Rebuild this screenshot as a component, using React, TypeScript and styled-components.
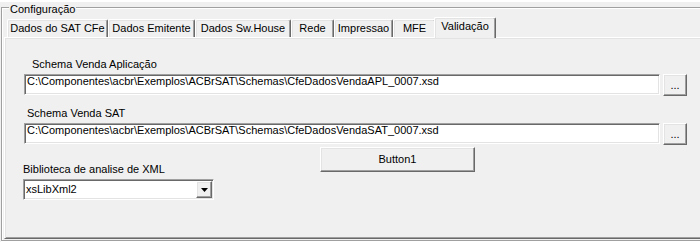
import React from 'react'
import styled, { createGlobalStyle } from "styled-components";

const GlobalStyle = createGlobalStyle`
  html, body {
    margin: 0;
    padding: 0;
    background: #f0f0f0;
  }
  body {
    font-family: "Liberation Sans", Arial, sans-serif;
    font-size: 11px;
    color: #000;
  }
`;

const tabs = [
  { label: "Dados do SAT CFe", width: 101 },
  { label: "Dados Emitente", width: 87 },
  { label: "Dados Sw.House", width: 96 },
  { label: "Rede", width: 43 },
  { label: "Impressao", width: 59 },
  { label: "MFE", width: 43 },
  { label: "Validação", width: 58 },
];

const App = () => {
  const active = 6;
  return (
    <>
      <GlobalStyle />
      <Window>
        <GroupBox>
          <Caption>Configuração</Caption>
          <TabControl>
            <TabStrip>
              {tabs.map((t, i) => (
                <Tab key={t.label} $width={t.width} $active={i === active}>
                  {t.label}
                </Tab>
              ))}
            </TabStrip>
            <Sheet>
              <Label $left={27} $top={20}>Schema Venda Aplicação</Label>
              <EditRow>
                <Edit>C:\Componentes\acbr\Exemplos\ACBrSAT\Schemas\CfeDadosVendaAPL_0007.xsd</Edit>
                <BrowseButton>...</BrowseButton>
              </EditRow>
              <Label $left={22} $top={11}>Schema Venda SAT</Label>
              <EditRow>
                <Edit>C:\Componentes\acbr\Exemplos\ACBrSAT\Schemas\CfeDadosVendaSAT_0007.xsd</Edit>
                <BrowseButton>...</BrowseButton>
              </EditRow>
              <BottomRow>
                <ComboColumn>
                  <Label $left={0} $top={0}>Biblioteca de analise de XML</Label>
                  <Combo>
                    <ComboText>xsLibXml2</ComboText>
                    <ComboButton>
                      <svg width="7" height="4" viewBox="0 0 7 4">
                        <path d="M0 0h7L3.5 4z" fill="#000" />
                      </svg>
                    </ComboButton>
                  </Combo>
                </ComboColumn>
                <Button1>Button1</Button1>
              </BottomRow>
            </Sheet>
          </TabControl>
        </GroupBox>
      </Window>
    </>
  )
}

const Window = styled.div`
  width: 700px;
  height: 242px;
  overflow: hidden;
  background: #f0f0f0;
  box-shadow: inset 0 2px 0 #fff, inset 0 1px 0 #f0f0f0;
  padding-top: 7px;
  box-sizing: border-box;
`;

const GroupBox = styled.div`
  position: relative;
  box-sizing: border-box;
  margin-left: 1px;
  width: 740px;
  height: 234px;
  border: 1px solid #a0a0a0;
  box-shadow: inset 1px 1px 0 #fff, 0 1px 0 #fff;
`;

const Caption = styled.span`
  position: absolute;
  top: -5px;
  left: 7px;
  padding: 0 1px;
  line-height: 13px;
  background: #f0f0f0;
`;

const TabControl = styled.div`
  margin: 9px 0 0 2px;
`;

const TabStrip = styled.div`
  display: flex;
  align-items: flex-end;
  height: 20px;
  padding-left: 3px;
`;

const Tab = styled.div<{ $width: number; $active: boolean }>`
  position: relative;
  box-sizing: border-box;
  width: ${p => p.$width + (p.$active ? 4 : 0)}px;
  height: ${p => (p.$active ? 21 : 18)}px;
  margin: ${p => (p.$active ? "0 -2px -1px -2px" : "0")};
  z-index: ${p => (p.$active ? 2 : 1)};
  padding-top: 2px;
  text-align: center;
  line-height: 13px;
  white-space: nowrap;
  background: #f0f0f0;
  border-top: 1px solid #fff;
  border-left: 1px solid #fff;
  border-right: 1px solid #696969;
  border-top-left-radius: 2px;
  border-top-right-radius: 2px;
  box-shadow: inset -1px 0 0 #a0a0a0, inset 1px 1px 0 #e3e3e3;
`;

const Sheet = styled.div`
  box-sizing: border-box;
  height: 202px;
  border-top: 1px solid #fff;
  border-left: 1px solid #fff;
  border-bottom: 1px solid #696969;
  box-shadow: inset 1px 1px 0 #e3e3e3, inset 0 -1px 0 #a0a0a0;
  overflow: hidden;
`;

const Label = styled.div<{ $left: number; $top: number }>`
  margin: ${p => p.$top}px 0 0 ${p => p.$left}px;
  line-height: 13px;
  white-space: nowrap;
`;

const EditRow = styled.div`
  display: flex;
  gap: 3px;
  margin: 3px 0 0 19px;
`;

const Edit = styled.div`
  box-sizing: border-box;
  width: 636px;
  height: 21px;
  padding: 0 2px;
  line-height: 13px;
  white-space: nowrap;
  overflow: hidden;
  background: #fff;
  border-top: 1px solid #a0a0a0;
  border-left: 1px solid #a0a0a0;
  border-bottom: 1px solid #fff;
  border-right: 1px solid #fff;
  box-shadow: inset 1px 1px 0 #696969, inset -1px -1px 0 #e3e3e3;
`;

const RaisedButton = styled.div`
  box-sizing: border-box;
  display: flex;
  align-items: center;
  justify-content: center;
  background: #f0f0f0;
  border-top: 1px solid #fff;
  border-left: 1px solid #fff;
  border-right: 1px solid #696969;
  border-bottom: 1px solid #696969;
  box-shadow: inset -1px -1px 0 #a0a0a0, inset 1px 1px 0 #e3e3e3;
`;

const BrowseButton = styled(RaisedButton)`
  width: 24px;
  height: 22px;
  align-items: flex-end;
  padding-bottom: 4px;
  line-height: 11px;
`;

const BottomRow = styled.div`
  display: flex;
  align-items: flex-start;
  margin: 2px 0 0 18px;
`;

const ComboColumn = styled.div`
  width: 191px;
  padding-top: 16px;
`;

const Combo = styled.div`
  box-sizing: border-box;
  display: flex;
  align-items: flex-start;
  justify-content: space-between;
  margin-top: 3px;
  height: 21px;
  background: #fff;
  border-top: 1px solid #a0a0a0;
  border-left: 1px solid #a0a0a0;
  border-bottom: 1px solid #fff;
  border-right: 1px solid #fff;
  box-shadow: inset 1px 1px 0 #696969, inset -1px -1px 0 #e3e3e3;
`;

const ComboText = styled.span`
  padding: 3px 0 0 2px;
  line-height: 13px;
`;

const ComboButton = styled(RaisedButton)`
  width: 16px;
  height: 17px;
  margin: 1px 1px 0 0;
  padding-top: 1px;
`;

const Button1 = styled(RaisedButton)`
  width: 155px;
  height: 25px;
  margin-left: 106px;
  line-height: 13px;
  padding-bottom: 1px;
`;

export default App
